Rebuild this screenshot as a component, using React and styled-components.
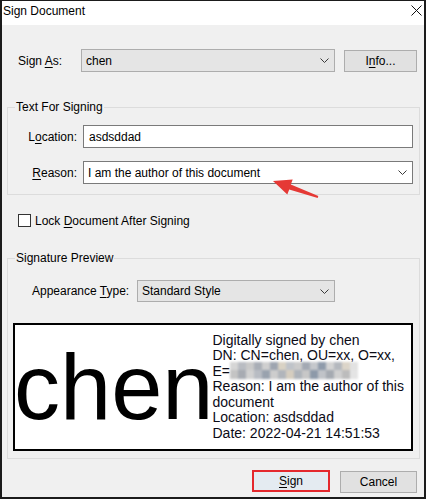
import React from "react";
import styled, { createGlobalStyle } from "styled-components";

const GlobalStyle = createGlobalStyle`
  html, body {
    margin: 0;
    padding: 0;
    background: #ffffff;
  }
  body {
    font-family: "Liberation Sans", Arial, sans-serif;
    font-size: 12px;
    color: #000;
  }
`;

const mosaic = [
  "#d6d6d6", "#b9bcc2", "#c9c9c9", "#a9aeb6", "#cfcfcf", "#9ea5b0", "#d9d2c4", "#bfc3c9",
  "#cbcbcb", "#a3a9b3", "#c5c8cc", "#8f9bab", "#d3d3d3", "#b4b8be", "#dcd5c9", "#e2e2e2",
  "#c4c4c4", "#a7abb2", "#d1d1d1", "#b8bcc3", "#99a2ae", "#cdcdcd", "#b1b5bb", "#d5cdbf",
  "#aeb3ba", "#c7c7c7", "#8d99a9", "#c0c3c8", "#a5aab1", "#d0d0d0", "#bcbcbc", "#e4e4e4",
];

export default function App() {
  return (
    <>
      <GlobalStyle />
      <Window>
        <TitleBar>
          <Title>Sign Document</Title>
          <CloseIcon width="11" height="11" viewBox="0 0 11 11">
            <path d="M0.5 0.5 L10.5 10.5 M10.5 0.5 L0.5 10.5" stroke="#111" strokeWidth="1" fill="none" />
          </CloseIcon>
        </TitleBar>

        <Body>
          <SignAsRow>
            <SignAsLabel>
              Sign <Mn>A</Mn>s:
            </SignAsLabel>
            <Combo $width={254}>
              <span>chen</span>
              <Chevron />
            </Combo>
            <PushButton $width={73}>
              I<Mn>n</Mn>fo...
            </PushButton>
          </SignAsRow>

          <Group $mt={35}>
            <Legend>Text For Signing</Legend>
            <FieldGrid>
              <FieldLabel>
                L<Mn>o</Mn>cation:
              </FieldLabel>
              <TextBox>asdsddad</TextBox>
              <FieldLabel>
                <Mn>R</Mn>eason:
              </FieldLabel>
              <Combo $white>
                <span>I am the author of this document</span>
                <Chevron />
              </Combo>
            </FieldGrid>
            <Arrow width="52" height="24" viewBox="0 0 52 24">
              <polygon
                points="3,3 22.7,1.5 20.8,6.6 48.3,18.1 47.7,19.9 19.2,11.4 17.3,16.5"
                fill="#e53935"
              />
            </Arrow>
          </Group>

          <CheckRow>
            <CheckBox />
            <span>
              Lock <Mn>D</Mn>ocument After Signing
            </span>
          </CheckRow>

          <Group $mt={31} $pt={21} $pb={7}>
            <Legend>Signature Preview</Legend>
            <AppearanceRow>
              <AppearanceLabel>
                Appearance <Mn>T</Mn>ype:
              </AppearanceLabel>
              <Combo $width={198} $height={22}>
                <span>Standard Style</span>
                <Chevron />
              </Combo>
            </AppearanceRow>
            <Preview>
              <BigName>chen</BigName>
              <SigText>
                <div>Digitally signed by chen</div>
                <div>DN: CN=chen, OU=xx, O=xx,</div>
                <div>
                  E=
                  <Mosaic>
                    {mosaic.map((c, i) => (
                      <MosaicCell key={i} $c={c} />
                    ))}
                  </Mosaic>
                </div>
                <div>Reason: I am the author of this</div>
                <div>document</div>
                <div>Location: asdsddad</div>
                <div>Date: 2022-04-21 14:51:53</div>
              </SigText>
            </Preview>
          </Group>

          <ButtonRow>
            <SignButton>
              <Mn>S</Mn>ign
            </SignButton>
            <PushButton $width={77} $mt={1}>
              Cancel
            </PushButton>
          </ButtonRow>
        </Body>
      </Window>
    </>
  );
}

function Chevron() {
  return (
    <svg width="9" height="5" viewBox="0 0 9 5">
      <path d="M0.5 0.5 L4.5 4.5 L8.5 0.5" stroke="#3a3a3a" strokeWidth="1" fill="none" />
    </svg>
  );
}

const Window = styled.div`
  width: 426px;
  height: 499px;
  box-sizing: border-box;
  border: 2px solid #1b1b1b;
  border-top-width: 1px;
  background: #f0f0f0;
  display: flex;
  flex-direction: column;
`;

const TitleBar = styled.div`
  height: 24px;
  background: #fff;
  display: flex;
  align-items: center;
  justify-content: space-between;
  padding: 0 1px 0 1px;
  flex-shrink: 0;
`;

const Title = styled.span`
  font-size: 12px;
  color: #000;
  margin-top: -4px;
`;

const CloseIcon = styled.svg`
  margin-top: -5px;
  margin-right: 1px;
`;

const Body = styled.div`
  display: flex;
  flex-direction: column;
  padding: 24px 4px 0 5px;
`;

const Mn = styled.span`
  text-decoration: underline;
  text-underline-offset: 2px;
`;

const SignAsRow = styled.div`
  display: flex;
  align-items: center;
  padding-left: 11px;
  height: 23px;
`;

const SignAsLabel = styled.span`
  width: 63px;
  flex-shrink: 0;
`;

const Combo = styled.div`
  box-sizing: border-box;
  width: ${(p) => (p.$width ? `${p.$width}px` : "auto")};
  height: ${(p) => p.$height || 23}px;
  border: 1px solid ${(p) => (p.$white ? "#7a7a7a" : "#adadad")};
  background: ${(p) => (p.$white ? "#ffffff" : "#e5e5e5")};
  display: flex;
  align-items: center;
  justify-content: space-between;
  padding: 0 5px 0 4px;
  font-size: 12px;
  white-space: nowrap;

  svg {
    flex-shrink: 0;
  }
`;

const PushButton = styled.div`
  box-sizing: border-box;
  width: ${(p) => p.$width}px;
  height: 22px;
  margin-left: 9px;
  margin-top: ${(p) => p.$mt || 0}px;
  border: 1px solid #adadad;
  background: #e1e1e1;
  display: flex;
  align-items: center;
  justify-content: center;
  font-size: 12px;
`;

const Group = styled.div`
  position: relative;
  margin-top: ${(p) => p.$mt}px;
  border: 1px solid #dcdcdc;
  padding: ${(p) => p.$pt || 17}px 0 ${(p) => p.$pb || 10}px 0;
`;

const Legend = styled.span`
  position: absolute;
  top: -8px;
  left: 7px;
  padding: 0 1px;
  line-height: 14px;
  background: #f0f0f0;
`;

const FieldGrid = styled.div`
  display: grid;
  grid-template-columns: 69px 1fr;
  column-gap: 6px;
  row-gap: 13px;
  align-items: center;
  padding-right: 6px;
`;

const FieldLabel = styled.span`
  text-align: right;
`;

const TextBox = styled.div`
  box-sizing: border-box;
  height: 23px;
  border: 1px solid #7a7a7a;
  background: #fff;
  display: flex;
  align-items: center;
  padding-left: 5px;
`;

const Arrow = styled.svg`
  position: absolute;
  left: 262px;
  top: 70px;
  overflow: visible;
`;

const CheckRow = styled.label`
  display: flex;
  align-items: center;
  gap: 4px;
  margin-top: 19px;
  padding-left: 11px;
  height: 13px;
`;

const CheckBox = styled.span`
  box-sizing: border-box;
  width: 13px;
  height: 13px;
  border: 1px solid #333;
  background: #fff;
`;

const AppearanceRow = styled.div`
  display: flex;
  align-items: center;
  padding-left: 24px;
`;

const AppearanceLabel = styled.span`
  width: 105px;
  flex-shrink: 0;
`;

const Preview = styled.div`
  box-sizing: border-box;
  height: 128px;
  margin: 21px 6px 0 5px;
  border: 2px solid #000;
  background: #fff;
  display: flex;
  align-items: center;
  overflow: hidden;
`;

const BigName = styled.span`
  font-family: "Liberation Sans", Arial, sans-serif;
  font-size: 92px;
  line-height: 92px;
  color: #000;
  flex-shrink: 0;
  margin-left: -1px;
  margin-right: -1px;
`;

const SigText = styled.div`
  flex: 1;
  min-width: 0;
  font-size: 14px;
  line-height: 15.5px;
  color: #0b0b16;
  white-space: nowrap;
`;

const Mosaic = styled.span`
  display: inline-grid;
  grid-template-columns: repeat(16, 8px);
  grid-template-rows: repeat(2, 8.5px);
  vertical-align: top;
  margin-top: -2px;
  filter: blur(0.9px);
`;

const MosaicCell = styled.span`
  background: ${(p) => p.$c};
`;

const ButtonRow = styled.div`
  display: flex;
  justify-content: flex-end;
  align-items: flex-start;
  margin-top: 11px;
  padding-right: 3px;
`;

const SignButton = styled.div`
  box-sizing: border-box;
  width: 78px;
  height: 22px;
  border: 2px solid #e4282d;
  background: #e4ebf1;
  display: flex;
  align-items: center;
  justify-content: center;
  font-size: 12px;
  margin-right: 1px;
`;
